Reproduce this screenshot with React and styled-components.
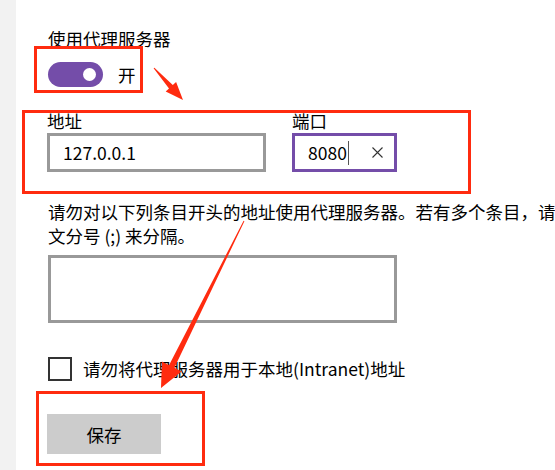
import styled, { createGlobalStyle } from 'styled-components'

const GlobalStyle = createGlobalStyle`
  body {
    margin: 0;
    background: #fff;
    font-family: 'Noto Sans CJK SC', sans-serif;
    color: #000;
  }
`

function App() {
  return (
    <Page>
      <GlobalStyle />
      <Strip />
      <Content>
        <Heading>使用代理服务器</Heading>
        <Mark box='toggle'>
          <ToggleRow>
            <Toggle>
              <Knob />
            </Toggle>
            <span>开</span>
          </ToggleRow>
        </Mark>
        <Mark box='fields'>
          <Fields>
            <Field>
              <Label>地址</Label>
              <TextBox width={219}>127.0.0.1</TextBox>
            </Field>
            <Field>
              <Label>端口</Label>
              <TextBox width={105} focused>
                8080
                <Caret />
                <Clear viewBox='0 0 11 11'>
                  <path d='M0.5 0.5 L10.5 10.5 M10.5 0.5 L0.5 10.5' />
                </Clear>
              </TextBox>
            </Field>
          </Fields>
        </Mark>
        <Note>
          请勿对以下列条目开头的地址使用代理服务器。若有多个条目，请使用英文分号 (;) 来分隔。
        </Note>
        <TextArea />
        <CheckRow>
          <CheckBox />
          <span>请勿将代理服务器用于本地(Intranet)地址</span>
        </CheckRow>
        <Mark box='save'>
          <SaveButton>保存</SaveButton>
        </Mark>
      </Content>
      <Arrows viewBox='0 0 555 470'>
        <polygon points='154.4,67.7 172.8,85 176.1,82 183,100 165.7,91.4 169,88.4 153.6,68.3' />
        <polygon points='244.4,221.2 174.4,367.8 181.5,371.4 161,388 161.9,361.6 169,365.2 243.6,220.8' />
      </Arrows>
    </Page>
  )
}
export default App

const red = '#ff2b0f'
const accent = '#744da9'

const Page = styled.div`
  position: relative;
  width: 555px;
  height: 470px;
  overflow: hidden;
  display: flex;
  font-size: 17.5px;
`

const Strip = styled.div`
  width: 16px;
  flex: none;
  background: #f2f2f2;
`

const Content = styled.div`
  flex: 1;
  padding: 27px 0 0 32px;
  display: flex;
  flex-direction: column;
  align-items: flex-start;
`

const Heading = styled.div`
  line-height: 24px;
`

const markStyles = {
  toggle: `
    margin: -5px 0 0 -14px;
    width: 109px;
    height: 47px;
    padding: 13px 0 0 11px;
  `,
  fields: `
    margin: 17px 0 0 -26px;
    width: 449px;
    height: 84px;
    padding: 0 0 0 22px;
  `,
  save: `
    margin: 10px 0 0 -12px;
    width: 169px;
    height: 75px;
    padding: 20px 0 0 8px;
  `,
}

const Mark = styled.div`
  box-sizing: border-box;
  border: 3px solid ${red};
  ${(props) => markStyles[props.box]}
`

const ToggleRow = styled.div`
  display: flex;
  align-items: center;
  gap: 15px;
  line-height: 25px;
`

const Toggle = styled.div`
  position: relative;
  width: 55px;
  height: 25px;
  border-radius: 13px;
  background: ${accent};
`

const Knob = styled.div`
  position: absolute;
  top: 6px;
  right: 7px;
  width: 13px;
  height: 13px;
  border-radius: 50%;
  background: #fff;
`

const Fields = styled.div`
  display: flex;
  gap: 26px;
`

const Field = styled.div`
  display: flex;
  flex-direction: column;
  gap: 4px;
`

const Label = styled.div`
  line-height: 16px;
`

const TextBox = styled.div`
  box-sizing: border-box;
  width: ${(props) => props.width}px;
  height: 39px;
  border: 3px solid ${(props) => (props.focused ? accent : '#999')};
  padding-left: 13px;
  display: flex;
  align-items: center;
  font-size: 17.5px;
`

const Caret = styled.span`
  width: 1.5px;
  height: 24px;
  margin-left: 1px;
  background: #555;
`

const Clear = styled.svg`
  width: 11px;
  height: 11px;
  margin-left: auto;
  margin-right: 11px;
  fill: none;
  stroke: #333;
  stroke-width: 1.1;
`

const Note = styled.p`
  margin: 6px 0 0;
  width: 568px;
  line-height: 24px;
`

const TextArea = styled.div`
  box-sizing: border-box;
  margin-top: 7px;
  width: 349px;
  height: 68px;
  border: 3px solid #999;
`

const CheckRow = styled.div`
  display: flex;
  align-items: center;
  gap: 11px;
  margin-top: 34px;
  line-height: 24px;
`

const CheckBox = styled.div`
  box-sizing: border-box;
  width: 24px;
  height: 24px;
  border: 2.5px solid #333;
`

const SaveButton = styled.div`
  width: 114px;
  height: 40px;
  background: #ccc;
  display: flex;
  align-items: center;
  justify-content: center;
`

const Arrows = styled.svg`
  position: absolute;
  top: 0;
  left: 0;
  width: 555px;
  height: 470px;
  pointer-events: none;
  fill: ${red};
`
